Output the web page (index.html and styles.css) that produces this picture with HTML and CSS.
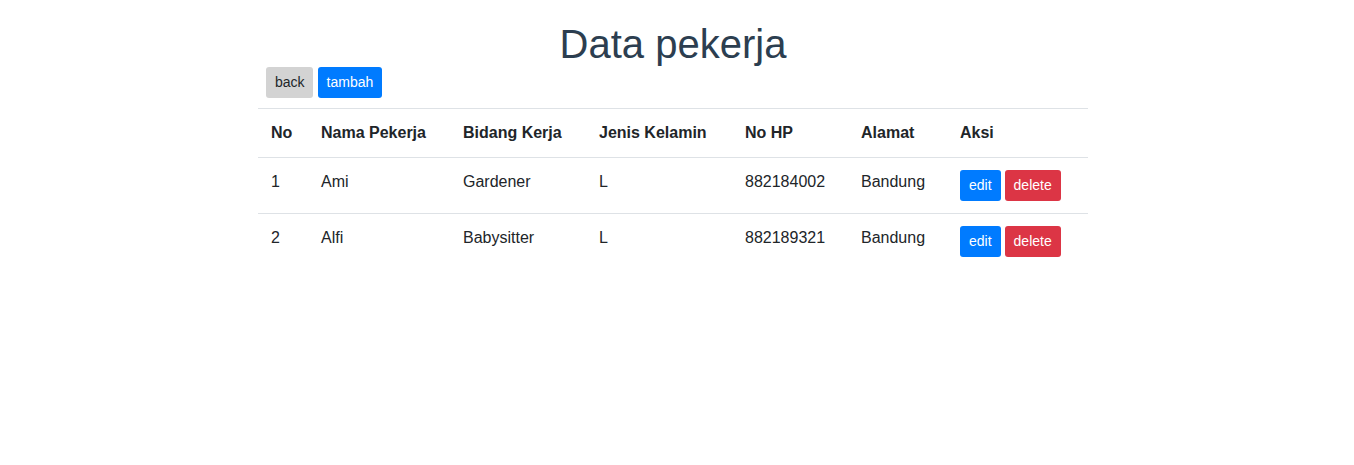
FILE: index.html
```html
<!DOCTYPE html>
<html>
<head>
<meta charset="utf-8">
<link rel="stylesheet" href="styles.css">
</head>
<body>
<div class="wrap">
  <h1 class="title">Data pekerja</h1>
  <div class="actions">
    <a class="btn btn-back">back</a> <a class="btn btn-primary">tambah</a>
  </div>
  <table class="table">
    <thead>
      <tr>
        <th class="c1">No</th>
        <th class="c2">Nama Pekerja</th>
        <th class="c3">Bidang Kerja</th>
        <th class="c4">Jenis Kelamin</th>
        <th class="c5">No HP</th>
        <th class="c6">Alamat</th>
        <th class="c7">Aksi</th>
      </tr>
    </thead>
    <tbody>
      <tr>
        <td class="first">1</td><td>Ami</td><td>Gardener</td><td>L</td><td>882184002</td><td>Bandung</td>
        <td class="aksi"><a class="btn btn-primary">edit</a> <a class="btn btn-danger">delete</a></td>
      </tr>
      <tr>
        <td class="first">2</td><td>Alfi</td><td>Babysitter</td><td>L</td><td>882189321</td><td>Bandung</td>
        <td class="aksi"><a class="btn btn-primary">edit</a> <a class="btn btn-danger">delete</a></td>
      </tr>
    </tbody>
  </table>
</div>
</body>
</html>
```
FILE: styles.css
```css
html, body {
  margin: 0;
  padding: 0;
  background: #fff;
}
body {
  font-family: "Liberation Sans", Arial, sans-serif;
  font-size: 16px;
  line-height: 1.5;
  color: #212529;
}
.wrap {
  width: 830px;
  margin-left: 258px;
  padding-top: 20px;
}
.title {
  margin: 0;
  text-align: center;
  font-size: 40px;
  line-height: 48px;
  font-weight: 400;
  color: #2c3e50;
}
.actions {
  margin-top: -1px;
  padding-left: 8px;
  height: 31px;
  margin-bottom: 10px;
  font-size: 0;
}
.actions .btn + .btn {
  margin-left: 5px;
}
.btn {
  display: inline-block;
  font-size: 14px;
  line-height: 21px;
  padding: 5px 9px;
  border-radius: 3px;
  color: #fff;
  vertical-align: top;
}
.btn-back {
  background: #d3d3d3;
  color: #212529;
  padding-right: 8px;
}
.btn-primary {
  background: #007bff;
}
.btn-danger {
  background: #dc3545;
}
.table {
  width: 830px;
  border-collapse: collapse;
  table-layout: fixed;
}
.table th,
.table td {
  box-sizing: border-box;
  text-align: left;
  vertical-align: top;
  padding: 12px;
  border-top: 1px solid #dee2e6;
  white-space: nowrap;
}
.table thead th {
  border-bottom: 1px solid #dee2e6;
  font-weight: 700;
}
.table .c1,
.table .first {
  padding-left: 13px;
}
.table .aksi {
  font-size: 0;
}
.table .aksi .btn + .btn {
  margin-left: 4px;
}
.c1 { width: 51px; }
.c2 { width: 142px; }
.c3 { width: 136px; }
.c4 { width: 146px; }
.c5 { width: 116px; }
.c6 { width: 99px; }
.c7 { width: 140px; }
```
